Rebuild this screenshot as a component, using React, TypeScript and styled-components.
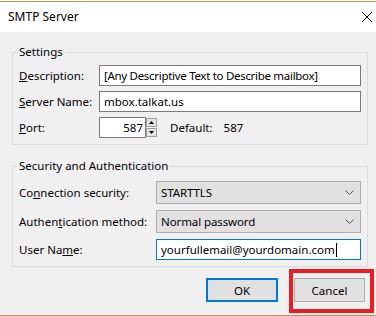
import styled, { createGlobalStyle } from 'styled-components';

const GlobalStyle = createGlobalStyle`
  * { box-sizing: border-box; }
  body {
    margin: 0;
    background: #ffffff;
    font-family: "Noto Sans", "Segoe UI", Arial, sans-serif;
    font-size: 11.5px;
    color: #000000;
  }
`;

const Window = styled.div`
  width: 376px;
  height: 315px;
  margin-top: 1px;
  display: flex;
  flex-direction: column;
  border-top: 1px solid #c8924a;
  border-bottom: 1px solid #c8924a;
`;

const TitleBar = styled.div`
  height: 30px;
  flex: none;
  display: flex;
  align-items: center;
  justify-content: space-between;
  padding: 0 4px 1px 8px;
  background: #ffffff;
  font-size: 12px;
`;

const CloseIcon = styled.svg`
  width: 10px;
  height: 10px;
  margin-top: 1px;
`;

const Body = styled.div`
  flex: 1;
  background: #f0f0f0;
  padding: 12px 8px 0 12px;
  display: flex;
  flex-direction: column;
`;

const Group = styled.fieldset<{ $top: number; $padTop: number }>`
  margin: ${p => p.$top}px 0 0 0;
  padding: ${p => p.$padTop}px 6px 6px 6px;
  border: 1px solid #dcdcdc;
  min-width: 0;
`;

const Legend = styled.legend`
  padding: 0 2px;
  margin-left: -2px;
  line-height: 16px;
`;

const FormGrid = styled.div<{ $labelWidth: number }>`
  display: grid;
  grid-template-columns: ${p => p.$labelWidth}px 1fr;
  align-items: center;
  row-gap: 5px;
`;

const Label = styled.div`
  white-space: nowrap;
`;

const TextField = styled.div<{ $focused?: boolean; $right?: boolean; $tight?: boolean }>`
  height: 21px;
  display: flex;
  align-items: center;
  justify-content: ${p => (p.$right ? 'flex-end' : 'flex-start')};
  padding: 0 4px;
  background: #ffffff;
  border: 1px solid ${p => (p.$focused ? '#0078d7' : '#7a7a7a')};
  letter-spacing: ${p => (p.$tight ? '-0.3px' : 'normal')};
  white-space: nowrap;
  overflow: hidden;
`;

const Caret = styled.span`
  display: inline-block;
  width: 1px;
  height: 14px;
  background: #000000;
  margin-left: 1px;
`;

const PortRow = styled.div`
  display: flex;
  align-items: center;
`;

const PortField = styled(TextField)`
  width: 47px;
  padding-right: 2px;
`;

const Spinner = styled.div`
  width: 11px;
  height: 21px;
  display: flex;
  flex-direction: column;
  gap: 1px;
  padding: 1px 0;
`;

const SpinButton = styled.div`
  flex: 1;
  display: flex;
  align-items: center;
  justify-content: center;
  background: #e5e5e5;
  border: 1px solid #a0a0a0;
`;

const DefaultText = styled.span`
  margin-left: 13px;
`;

const DefaultValue = styled.span`
  margin-left: 11px;
`;

const Select = styled.div`
  height: 23px;
  display: flex;
  align-items: center;
  justify-content: space-between;
  padding: 0 6px 0 4px;
  background: #e1e1e1;
  border: 1px solid #adadad;
  letter-spacing: -0.1px;
`;

const SecurityGrid = styled(FormGrid)`
  row-gap: 6px;
`;

const ButtonRow = styled.div`
  display: flex;
  justify-content: flex-end;
  gap: 16px;
  margin-top: 11px;
  padding-right: 3px;
`;

const Button = styled.div<{ $default?: boolean; $width: number }>`
  width: ${p => p.$width}px;
  height: 24px;
  display: flex;
  align-items: center;
  justify-content: center;
  background: #e1e1e1;
  border: ${p => (p.$default ? '2px solid #0078d7' : '1px solid #adadad')};
`;

const Highlighted = styled.div`
  position: relative;
`;

const HighlightBox = styled.div`
  position: absolute;
  left: -5px;
  top: -9px;
  width: 85px;
  height: 44px;
  border: 4px solid #ed1c24;
  pointer-events: none;
`;

function Chevron() {
  return (
    <svg width="9" height="5" viewBox="0 0 9 5">
      <path d="M0.5 0.5 L4.5 4.5 L8.5 0.5" fill="none" stroke="#505050" strokeWidth="1" />
    </svg>
  );
}

function Arrow({ up }: { up?: boolean }) {
  return (
    <svg width="5" height="3" viewBox="0 0 5 3">
      <path d={up ? 'M0 3 L2.5 0 L5 3 Z' : 'M0 0 L2.5 3 L5 0 Z'} fill="#000" />
    </svg>
  );
}

export default function App() {
  return (
    <>
      <GlobalStyle />
      <Window>
        <TitleBar>
          <span>SMTP Server</span>
          <CloseIcon viewBox="0 0 10 10">
            <path d="M0 0 L10 10 M10 0 L0 10" stroke="#000" strokeWidth="1" />
          </CloseIcon>
        </TitleBar>
        <Body>
          <Group $top={0} $padTop={5}>
            <Legend>Settings</Legend>
            <FormGrid $labelWidth={80}>
              <Label><u>D</u>escription:</Label>
              <TextField $tight>[Any Descriptive Text to Describe mailbox]</TextField>
              <Label><u>S</u>erver Name:</Label>
              <TextField>mbox.talkat.us</TextField>
              <Label><u>P</u>ort:</Label>
              <PortRow>
                <PortField $right>587</PortField>
                <Spinner>
                  <SpinButton><Arrow up /></SpinButton>
                  <SpinButton><Arrow /></SpinButton>
                </Spinner>
                <DefaultText>Default:</DefaultText>
                <DefaultValue>587</DefaultValue>
              </PortRow>
            </FormGrid>
          </Group>
          <Group $top={13} $padTop={7}>
            <Legend>Security and Authentication</Legend>
            <SecurityGrid $labelWidth={137}>
              <Label>Co<u>n</u>nection security:</Label>
              <Select>
                <span>STARTTLS</span>
                <Chevron />
              </Select>
              <Label>Authen<u>t</u>ication method:</Label>
              <Select>
                <span>Normal password</span>
                <Chevron />
              </Select>
              <Label>User Na<u>m</u>e:</Label>
              <TextField $focused>
                yourfullemail@yourdomain.com
                <Caret />
              </TextField>
            </SecurityGrid>
          </Group>
          <ButtonRow>
            <Button $default $width={72}>OK</Button>
            <Highlighted>
              <Button $width={71}>Cancel</Button>
              <HighlightBox />
            </Highlighted>
          </ButtonRow>
        </Body>
      </Window>
    </>
  );
}
